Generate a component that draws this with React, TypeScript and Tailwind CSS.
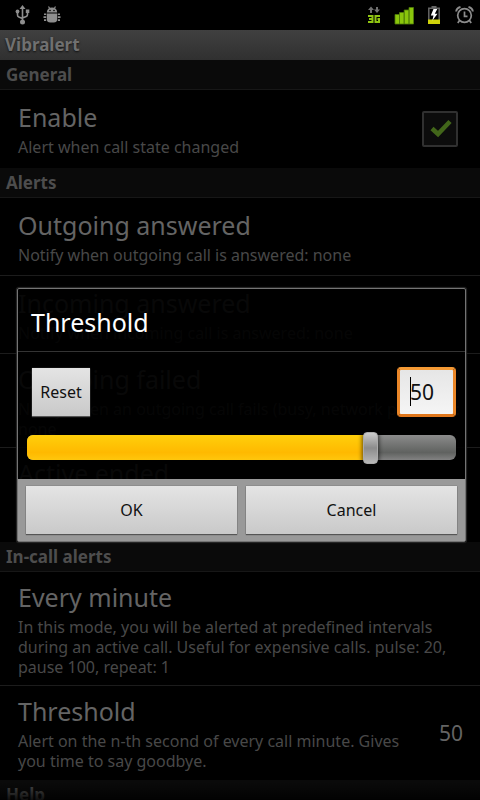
import React, { useState } from 'react';

interface PreferenceRowProps {
  title: string;
  summary: string;
  divider?: boolean;
  children?: React.ReactNode;
}

const CategoryHeader: React.FC<{ title: string }> = ({ title }) => (
  <h2 className="flex h-[30px] items-center border-b border-[#171717] bg-[#0a0a0a] px-[6px] text-[17px] leading-[20px] font-bold text-[#4d4d4d]">
    {title}
  </h2>
);

/**
 * Single preference: title, summary and an optional widget on the right
 */
const PreferenceRow: React.FC<PreferenceRowProps> = ({ title, summary, divider = false, children }) => (
  <div
    className={`flex min-h-[78px] items-center justify-between gap-4 border-b pt-[9px] pb-[8px] pl-[18px] ${
      divider ? 'border-[#1c1c1c]' : 'border-transparent'
    }`}
  >
    <div className="min-w-0 flex-1 pr-2">
      <h3 className="mb-[4px] text-[25px] leading-[32px] text-[#646464]">{title}</h3>
      <p className="text-[16px] leading-[20px] text-[#484848]">{summary}</p>
    </div>
    {children}
  </div>
);

const StatusBar: React.FC = () => (
  <header className="flex h-[30px] shrink-0 items-center justify-between bg-black pr-[6px] pl-[14px]">
    <div className="flex items-center gap-[13px]">
      {/* USB */}
      <svg className="h-[20px] w-[16px]" viewBox="0 0 16 20" fill="none" stroke="#8e8e8e" strokeWidth="1.6">
        <path d="M8.5 3v13M3.5 8v2q0 1.500 1.300 2l3.700 1.500M13.500 8v1.500q0 1.500-1.300 2L8.500 13" />
        <path d="M8.500 0l3 4h-6z" fill="#8e8e8e" stroke="none" />
        <circle cx="8.500" cy="17" r="2.500" fill="#8e8e8e" stroke="none" />
        <circle cx="3.500" cy="6.500" r="1.900" fill="#8e8e8e" stroke="none" />
        <path d="M11.800 4.500h3.500V8h-3.500z" fill="#8e8e8e" stroke="none" />
      </svg>
      {/* Debug bug */}
      <svg className="h-[20px] w-[18px]" viewBox="0 0 18 20" fill="#8e8e8e">
        <path d="M3.800 7.500q.400-5 5.200-5t5.200 5z" />
        <path d="M5.500 1.500l1.200 2M12.500 1.500l-1.200 2" stroke="#8e8e8e" strokeWidth="1.200" />
        <path d="M3.800 8.600h10.400V14q0 3.500-3.500 3.500H7.300Q3.800 17.500 3.800 14z" />
        <path d="M1 8.500h2.200v1.600H1zM.500 11.300h2.700v1.700H.5zM1 14.200h2.200v1.700H1zM14.800 8.500H17v1.600h-2.200zM14.800 11.300h2.700v1.700h-2.700zM14.800 14.200H17v1.700h-2.200z" />
        <circle cx="7" cy="5.500" r=".8" fill="#000" />
        <circle cx="11" cy="5.500" r=".8" fill="#000" />
      </svg>
    </div>
    <div className="flex items-center gap-[12px]">
      {/* 3G data */}
      <svg className="h-[20px] w-[16px]" viewBox="0 0 16 20" fill="none">
        <path d="M5 8V4M11 2v4" stroke="#707070" strokeWidth="2" />
        <path d="M5 1.500L8 5H2zM11 8L8 4.500h6z" fill="#707070" />
        <path d="M2 11h4.500v6H2M3 14h3.500M14 11H9.500v6H13V14H11.500" stroke="#8fc412" strokeWidth="2" />
      </svg>
      {/* Signal */}
      <svg className="h-[20px] w-[20px]" viewBox="0 0 20 20" fill="#8ac60c" stroke="#4f7c08" strokeWidth=".8">
        <path d="M1 9.500h4.500V19H1zM5.500 7.500h4.700V19H5.500zM10.200 5H15v14h-4.800zM15 2.500h4.500V19H15z" />
      </svg>
      {/* Battery, charging */}
      <svg className="h-[20px] w-[16px]" viewBox="0 0 16 20" fill="none">
        <path d="M5.500 1h5v2h-5z" fill="#666" />
        <path d="M2.800 3.200h10.400v14.800H2.800z" stroke="#666" strokeWidth="1.500" />
        <path d="M2 14.500h12V19H2z" fill="#cfd20a" />
        <path d="M7.500 4L4.800 10.500h2.700L6.300 15.800 11.500 8.800H8.800L11.300 4z" fill="#fff" />
      </svg>
      {/* Alarm */}
      <svg className="h-[20px] w-[20px]" viewBox="0 0 20 20" fill="none" stroke="#8c8c8c" strokeWidth="1.700">
        <circle cx="10.500" cy="10.500" r="6.800" />
        <path d="M10.500 6.500v4.800h3M5.500 15.500l-1.700 2.500M15.500 15.500l1.700 2.500" />
        <path d="M2.200 6.500q.300-3.500 4.300-4.500M18.800 6.500q-.300-3.500-4.300-4.500" strokeWidth="2" />
      </svg>
    </div>
  </header>
);

const buttonClass =
  'bg-linear-to-b from-[#e4e4e4] to-[#c9c9c9] text-[16px] leading-[20px] text-[#111] shadow-[0_1px_1px_#555,0_0_1px_#555]';

const ThresholdDialog: React.FC = () => {
  const min = 11;
  const max = 59;
  const [threshold, setThreshold] = useState<number>(50);
  const percent = ((threshold - min) / (max - min)) * 100;

  return (
    <div className="absolute inset-x-0 top-[30px] bottom-0 flex items-center pr-[14px] pl-[17px]">
      <div
        role="dialog"
        aria-labelledby="dialog-title"
        className="w-full rounded-[2px] border border-[#747474] bg-black/92 shadow-[0_0_1px_1px_#2a2a2a]"
      >
        <h2
          id="dialog-title"
          className="flex h-[63px] items-center border-b border-[#343434] pt-[4px] pl-[13px] text-[25px] leading-[32px] text-white"
        >
          Threshold
        </h2>
        <div className="px-[9px] py-[15px]">
          <div className="flex items-center justify-between pl-[5px]">
            <button type="button" onClick={() => setThreshold(50)} className={`h-[48px] w-[58px] ${buttonClass}`}>
              Reset
            </button>
            <label className="relative block">
              <input
                type="text"
                inputMode="numeric"
                aria-label="Threshold"
                value={threshold}
                onChange={(e) => setThreshold(Number(e.target.value) || min)}
                className="block h-[50px] w-[59px] rounded-[4px] border-3 border-[#ea8628] border-t-[#f59a35] border-b-[#e0771c] bg-linear-to-b from-[#e6e6e6] to-[#f5f5f5] pl-[10px] text-[21px] leading-[28px] text-[#111] outline-none"
              />
              <span className="absolute top-[10px] left-[13px] h-[29px] w-px bg-black" />
            </label>
          </div>
          {/* Slider */}
          <div className="relative mt-[15px] h-[32px]">
            <div className="absolute inset-x-0 top-[3px] h-[25px] overflow-hidden rounded-[6px] bg-linear-to-b from-[#8c8c8c] via-[#606260] via-70% to-[#828282]">
              <div
                className="h-full bg-linear-to-b from-[#ffcf0b] via-[#ffb900] via-70% to-[#ffc60c]"
                style={{ width: `${percent}%` }}
              />
            </div>
            <input
              type="range"
              aria-label="Threshold slider"
              min={min}
              max={max}
              value={threshold}
              onChange={(e) => setThreshold(Number(e.target.value))}
              className="relative block h-[32px] w-full appearance-none bg-transparent outline-none [&::-webkit-slider-thumb]:h-[32px] [&::-webkit-slider-thumb]:w-[15px] [&::-webkit-slider-thumb]:appearance-none [&::-webkit-slider-thumb]:rounded-[4px] [&::-webkit-slider-thumb]:border [&::-webkit-slider-thumb]:border-[#aaaaaa] [&::-webkit-slider-thumb]:bg-linear-to-b [&::-webkit-slider-thumb]:from-[#cccccc] [&::-webkit-slider-thumb]:via-[#8c8c8c] [&::-webkit-slider-thumb]:to-[#b8b8b8] [&::-webkit-slider-thumb]:shadow-[0_0_4px_1px_rgba(0,0,0,0.6)]"
            />
          </div>
        </div>
        <div className="grid grid-cols-2 gap-[9px] bg-[#999999] px-[8px] pt-[7px] pb-[7px]">
          <button type="button" className={`h-[48px] ${buttonClass}`}>
            OK
          </button>
          <button type="button" className={`h-[48px] ${buttonClass}`}>
            Cancel
          </button>
        </div>
      </div>
    </div>
  );
};

export default function App() {
  const [enabled, setEnabled] = useState<boolean>(true);

  return (
    <div className="relative flex h-screen flex-col overflow-hidden bg-black font-['Noto_Sans','Open_Sans',sans-serif]">
      <StatusBar />
      <h1 className="flex h-[30px] shrink-0 items-center bg-linear-to-b from-[#404040] to-[#303030] px-[5px] text-[17px] leading-[20px] font-bold text-[#707070] [text-shadow:0_1px_2px_#111]">
        Vibralert
      </h1>

      <main className="min-h-0 flex-1 overflow-hidden">
        <CategoryHeader title="General" />
        <PreferenceRow title="Enable" summary="Alert when call state changed">
          <label className="relative mr-[22px] block size-[36px]">
            <input
              type="checkbox"
              aria-label="Enable"
              checked={enabled}
              onChange={(e) => setEnabled(e.target.checked)}
              className="block size-[36px] appearance-none rounded-[2px] border-2 border-[#303030] bg-[#0c0c0c]"
            />
            {enabled && (
              <svg className="pointer-events-none absolute inset-0" viewBox="0 0 36 36" fill="none">
                <path d="M10 17.500l6 5.500L28 10.500" stroke="#42661a" strokeWidth="4.500" />
              </svg>
            )}
          </label>
        </PreferenceRow>

        <CategoryHeader title="Alerts" />
        <PreferenceRow
          title="Outgoing answered"
          summary="Notify when outgoing call is answered: none"
          divider
        />
        <PreferenceRow
          title="Incoming answered"
          summary="Notify when incoming call is answered: none"
          divider
        />
        <PreferenceRow
          title="Outgoing failed"
          summary="Notify when an outgoing call fails (busy, network problem): none"
          divider
        />
        <PreferenceRow
          title="Active ended"
          summary="Notify when an active call is ended by the other party or the network: none"
        />

        <CategoryHeader title="In-call alerts" />
        <PreferenceRow
          title="Every minute"
          summary="In this mode, you will be alerted at predefined intervals during an active call. Useful for expensive calls. pulse: 20, pause 100, repeat: 1"
          divider
        />
        <PreferenceRow
          title="Threshold"
          summary="Alert on the n-th second of every call minute. Gives you time to say goodbye."
        >
          <span className="pr-[17px] text-[21px] leading-[28px] text-[#646464]">50</span>
        </PreferenceRow>

        <CategoryHeader title="Help" />
      </main>

      {/* Fading edge of the list */}
      <div className="pointer-events-none absolute inset-x-0 bottom-0 h-[18px] bg-linear-to-b from-transparent to-black/80" />

      <ThresholdDialog />
    </div>
  );
}
